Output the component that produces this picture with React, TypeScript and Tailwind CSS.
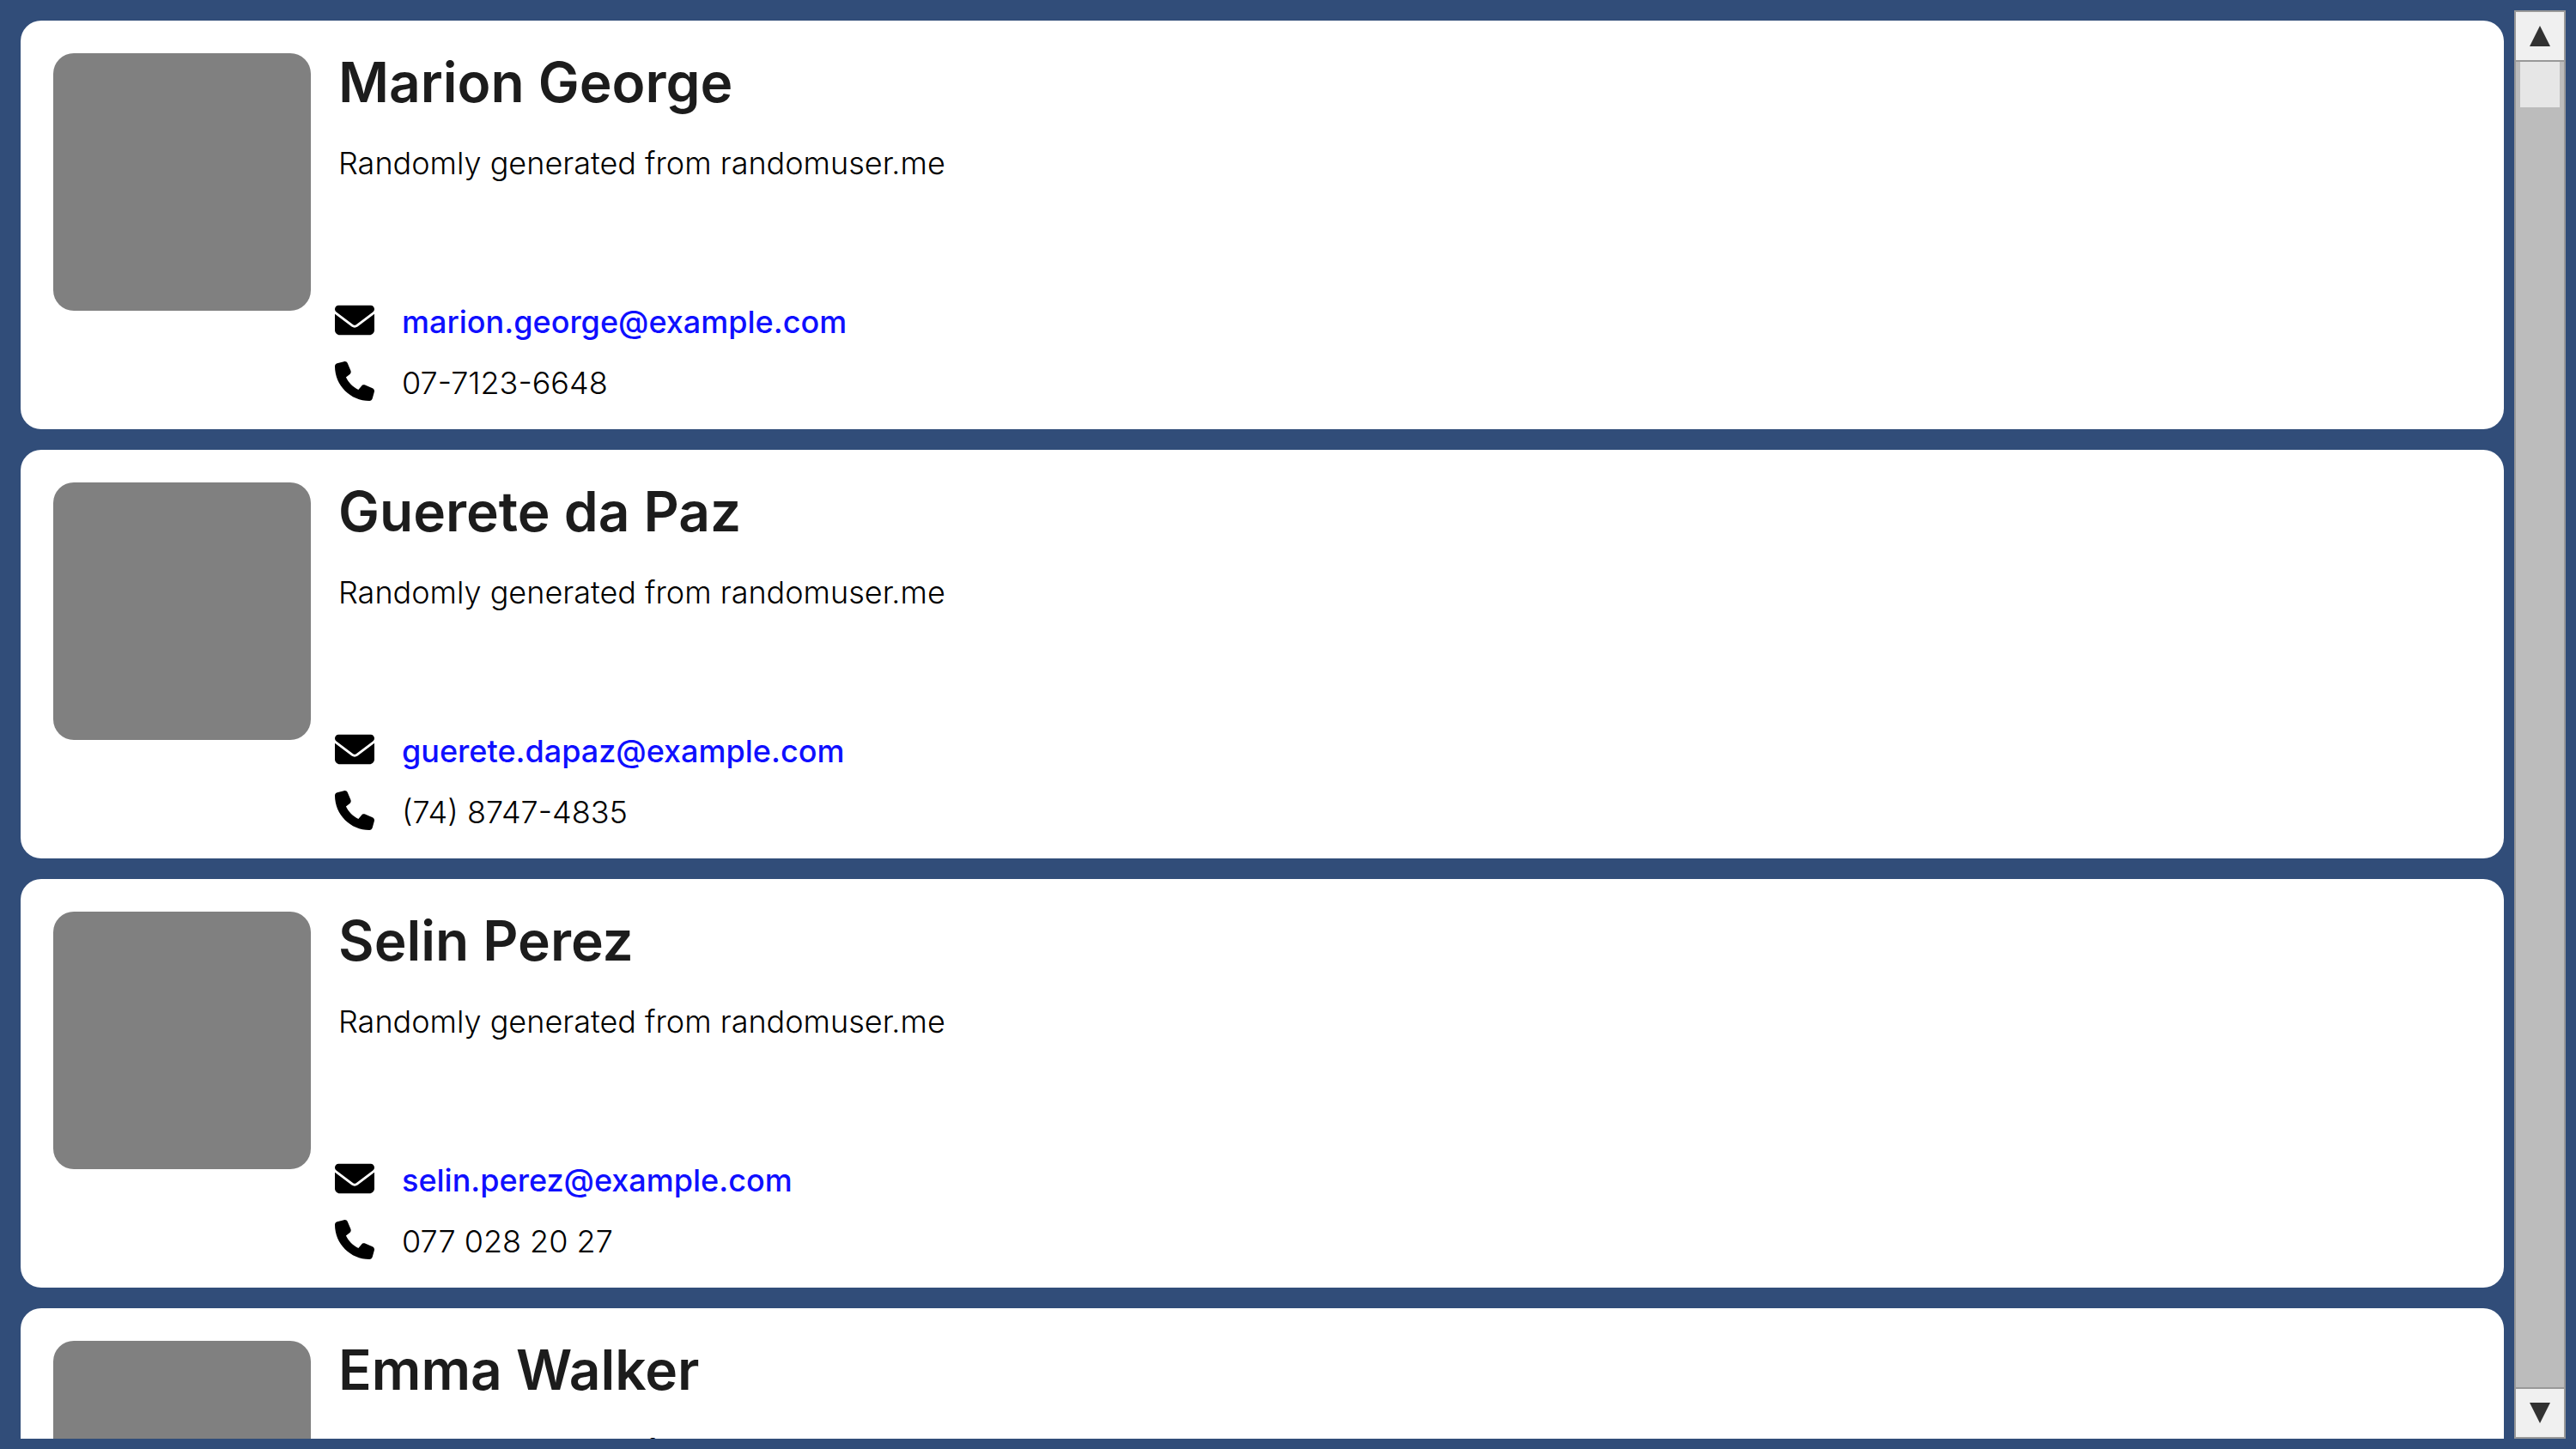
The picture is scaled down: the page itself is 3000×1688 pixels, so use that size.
import { FaEnvelope, FaPhone } from "react-icons/fa6";

type Contact = { name: string; about: string; email: string; phone: string };

const ABOUT = "Randomly generated from randomuser.me";

const contacts: Contact[] = [
  { name: "Marion George", about: ABOUT, email: "marion.george@example.com", phone: "07-7123-6648" },
  { name: "Guerete da Paz", about: ABOUT, email: "guerete.dapaz@example.com", phone: "(74) 8747-4835" },
  { name: "Selin Perez", about: ABOUT, email: "selin.perez@example.com", phone: "077 028 20 27" },
  { name: "Emma Walker", about: ABOUT, email: "emma.walker@example.com", phone: "(021) 455-0182" },
];

function ContactCard({ contact }: { contact: Contact }) {
  return (
    <li className="flex shrink-0 gap-7 rounded-3xl bg-white px-[38px] pt-[38px] pb-6">
      <div className="size-[300px] shrink-0 rounded-3xl bg-[#808080]" />
      <div className="flex min-w-0 flex-1 flex-col">
        <div className="flex h-[286px] flex-col gap-6 pl-1">
          <h2 className="text-[64px] leading-[68px] font-semibold text-[#1c1c1c]">{contact.name}</h2>
          <p className="text-[36px] leading-[72px] font-light text-black">{contact.about}</p>
        </div>
        <div className="flex flex-col gap-[14px]">
          <div className="flex h-[50px] items-center gap-8">
            <FaEnvelope className="size-[46px] shrink-0 text-black" aria-hidden="true" />
            <a href={`mailto:${contact.email}`} className="pt-1 text-[36px] leading-[46px] font-medium text-[#0f0fff]">
              {contact.email}
            </a>
          </div>
          <div className="flex h-[64px] items-center gap-8">
            <FaPhone className="size-[46px] shrink-0 text-black" aria-hidden="true" />
            <span className="pt-1 text-[36px] leading-[46px] font-light text-black">{contact.phone}</span>
          </div>
        </div>
      </div>
    </li>
  );
}

function Scrollbar() {
  return (
    <div className="flex w-[60px] shrink-0 flex-col border-2 border-[#999999] bg-[#bcbcbc]">
      <button
        type="button"
        aria-label="Scroll up"
        className="flex h-[58px] w-full items-center justify-center border-b-2 border-[#999999] bg-[#f0f0f0]"
      >
        <svg viewBox="0 0 24 24" className="size-6 fill-[#323232]" aria-hidden="true">
          <path d="M12 0 24 24H0Z" />
        </svg>
      </button>
      <div className="flex-1 px-[5px]">
        <div className="h-[53px] bg-[#e6e6e6]" />
      </div>
      <button
        type="button"
        aria-label="Scroll down"
        className="flex h-[58px] w-full items-center justify-center border-t-2 border-[#999999] bg-[#f0f0f0]"
      >
        <svg viewBox="0 0 24 24" className="size-6 fill-[#323232]" aria-hidden="true">
          <path d="M0 0H24L12 24Z" />
        </svg>
      </button>
    </div>
  );
}

export default function App() {
  return (
    <div className="flex h-screen bg-[#314d79] p-3 font-[Inter,sans-serif]">
      <ul className="flex min-w-0 flex-1 flex-col gap-6 overflow-hidden p-3">
        {contacts.map((contact) => (
          <ContactCard key={contact.email} contact={contact} />
        ))}
      </ul>
      <Scrollbar />
    </div>
  );
}
